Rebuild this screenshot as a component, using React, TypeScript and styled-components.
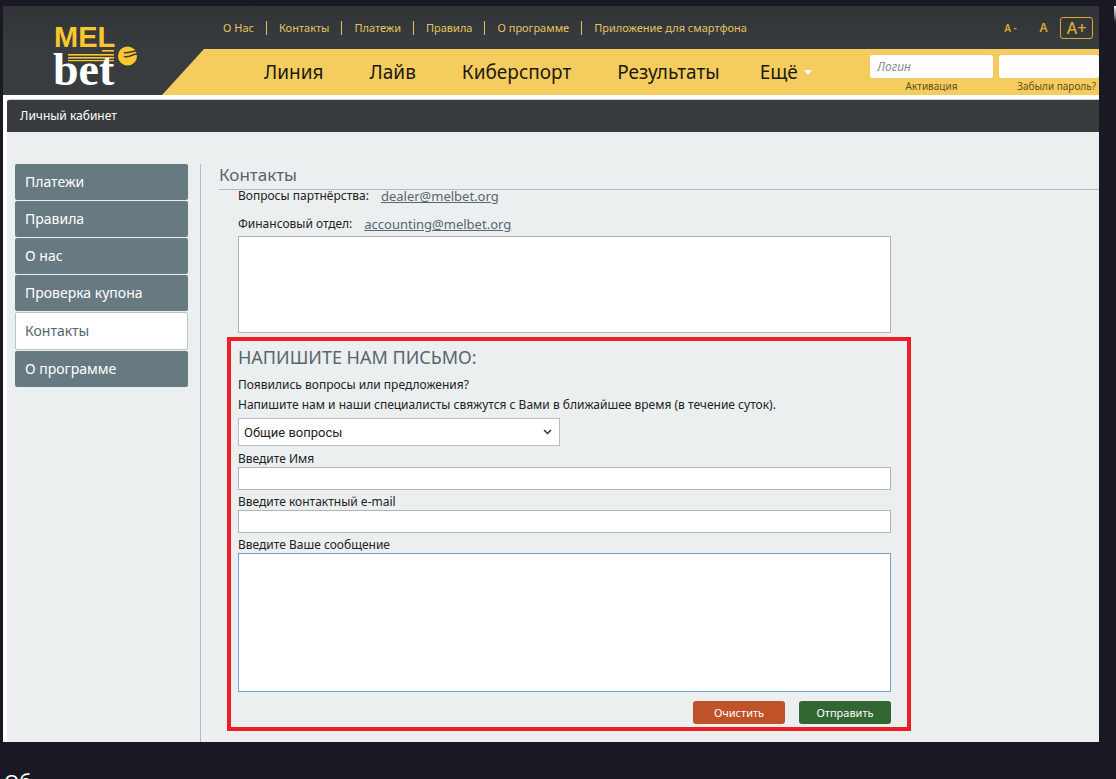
import React from "react";
import styled, { createGlobalStyle } from "styled-components";

const sans = `"Noto Sans", "Open Sans", sans-serif`;

const GlobalStyle = createGlobalStyle`
  *, *::before, *::after { box-sizing: border-box; }
  html { scrollbar-width: none; }
  body {
    margin: 0;
    background: #1a1923;
    font-family: ${sans};
    font-size: 12px;
    color: #222;
  }
  a { color: inherit; text-decoration: none; }
  button, input, select, textarea { font-family: inherit; margin: 0; }
  h1, h2, p { margin: 0; font-weight: 400; }
`;

const Page = styled.div`
  display: grid;
  grid-template-columns: minmax(0, 1fr) 2px;
  column-gap: 15px;
  padding: 6px 0 0 3px;
`;

const Frame = styled.div`
  background: #fff;
  overflow: hidden;
`;

const EdgeGlow = styled.div`
  height: 16px;
  background: linear-gradient(#f4f4f4, #8a8a90 60%, #1a1923);
`;

const Header = styled.header`
  display: grid;
  grid-template-columns: 159px minmax(0, 1fr);
  background: linear-gradient(#303437, #383c3f 40px);
`;

const Logo = styled.a`
  display: block;
  padding-left: 45px;
  height: 89px;
  svg { display: block; overflow: visible; }
`;

const TopRow = styled.div`
  display: flex;
  justify-content: space-between;
  align-items: center;
  height: 43px;
  padding: 0 6px 0 49px;
`;

const TopLinks = styled.nav`
  display: flex;
  font-size: 11px;
  line-height: 14px;
  white-space: nowrap;
  color: #e6c25e;
  a { padding: 0 12px; }
  a + a { border-left: 1px solid #e6c25e; }
`;

const TextSizes = styled.div`
  display: flex;
  align-items: center;
`;

const SizeButton = styled.button<{ $size: number; $active?: boolean }>`
  width: 33px;
  height: 22px;
  padding: 0;
  border: 1px solid ${(p) => (p.$active ? "#dca92f" : "transparent")};
  border-radius: 3px;
  background: none;
  color: #dca92f;
  font-size: ${(p) => p.$size}px;
  font-weight: ${(p) => (p.$active ? 500 : 600)};
  line-height: 18px;
`;

const NavBar = styled.div`
  display: flex;
  justify-content: space-between;
  height: 46px;
  padding-left: 102px;
  background: #f5cd5f;
  clip-path: polygon(42px 0, 100% 0, 100% 100%, 0 100%);
`;

const MainNav = styled.nav`
  display: flex;
  align-items: center;
  gap: 46px;
  font-size: 19px;
  white-space: nowrap;
  color: #1c1a10;
`;

const MoreLink = styled.a`
  display: flex;
  align-items: center;
  gap: 6px;
  margin-left: -6px;
  &::after {
    content: "";
    border: 4px solid transparent;
    border-top: 5px solid #fff;
    border-bottom: 0;
  }
`;

const Login = styled.form`
  display: grid;
  grid-template-columns: 123px 100px;
  column-gap: 6px;
  align-content: start;
  padding-top: 6px;
`;

const LoginInput = styled.input`
  width: 100%;
  height: 23px;
  padding: 0 7px;
  border: 0;
  border-radius: 2px;
  background: #fff;
  box-shadow: 0 0 1px #b99a45;
  font-size: 12px;
  font-style: italic;
  &::placeholder { color: #8b8b8b; opacity: 1; }
`;

const LoginLink = styled.a`
  font-size: 10px;
  line-height: 16px;
  text-align: center;
  white-space: nowrap;
  color: #5f5022;
  &:last-child { text-align: right; padding-right: 3px; }
`;

const Body = styled.div`
  margin: 4px 0 0 4px;
  background: #ebeff0;
`;

const AccountBar = styled.div`
  height: 33px;
  padding-left: 13px;
  border-top: 1px solid #ccd2d5;
  border-radius: 3px 0 0 0;
  background: #373b3e;
  font-size: 12px;
  line-height: 32px;
  color: #fff;
`;

const Columns = styled.div`
  display: grid;
  grid-template-columns: 185px minmax(0, 1fr);
  padding: 32px 0 0 8px;
`;

const Sidebar = styled.nav`
  display: flex;
  flex-direction: column;
  gap: 1px;
  width: 173px;
`;

const SideLink = styled.a<{ $active?: boolean }>`
  height: ${(p) => (p.$active ? 38 : 36)}px;
  padding-left: ${(p) => (p.$active ? 9 : 10)}px;
  border: ${(p) => (p.$active ? "1px solid #b9c4c8" : "0")};
  border-radius: 2px;
  background: ${(p) => (p.$active ? "#fff" : "#687a81")};
  color: ${(p) => (p.$active ? "#56666d" : "#fff")};
  font-size: 14px;
  line-height: 36px;
`;

const Content = styled.main`
  padding: 0 0 11px 18px;
  border-left: 1px solid #b4bcc0;
`;

const Title = styled.h1`
  height: 26px;
  border-bottom: 1px solid #b2babe;
  font-size: 17px;
  line-height: 22px;
  color: #56666d;
`;

const Contacts = styled.div`
  display: grid;
  row-gap: 16px;
  padding-left: 19px;
`;

const ContactLine = styled.p`
  display: flex;
  align-items: center;
  gap: 12px;
  font-size: 12px;
  line-height: 12px;
  a {
    font-size: 13px;
    color: #56666d;
    text-decoration: underline;
  }
`;

const Notice = styled.div`
  height: 97px;
  max-width: 653px;
  margin: 6px 20px 0 19px;
  border: 1px solid #b1b5b8;
  background: #fff;
`;

const LetterForm = styled.form`
  display: flex;
  flex-direction: column;
  max-width: 684px;
  margin: 4px 0 0 8px;
  padding: 4px 16px 3px 7px;
  border: 4px solid #ec1f26;
`;

const FormTitle = styled.h2`
  font-size: 18px;
  line-height: 24px;
  margin-bottom: 6px;
  color: #56666d;
`;

const Hint = styled.p`
  font-size: 12px;
  line-height: 20px;
`;

const SelectBox = styled.div`
  display: grid;
  max-width: 322px;
  margin: 3px 0 4px;
  > * { grid-area: 1 / 1; }
  svg { justify-self: end; align-self: center; margin-right: 8px; pointer-events: none; }
`;

const Select = styled.select`
  appearance: none;
  width: 100%;
  height: 28px;
  padding: 0 5px;
  border: 1px solid #b9bdc0;
  border-radius: 0;
  background: #fff;
  color: #222;
  font-family: Roboto, ${sans};
  font-size: 13px;
`;

const Label = styled.label`
  font-size: 12px;
  line-height: 18px;
  margin-bottom: -1px;
`;

const TextInput = styled.input`
  width: 100%;
  height: 23px;
  margin-bottom: 3px;
  border: 1px solid #b1b5b8;
  background: #fff;
`;

const Message = styled.textarea`
  display: block;
  width: 100%;
  height: 139px;
  border: 1px solid #72a4d2;
  background: #fff;
  resize: none;
  outline: 0;
`;

const Actions = styled.div`
  display: flex;
  justify-content: flex-end;
  gap: 14px;
  margin-top: 9px;
`;

const ActionButton = styled.button<{ $color: string }>`
  width: 92px;
  height: 23px;
  padding: 0;
  border: 0;
  border-radius: 3px;
  background: ${(p) => p.$color};
  color: #fff;
  font-size: 11px;
`;

const Caption = styled.p`
  grid-column: 1;
  margin-top: 26px;
  padding-left: 1px;
  font-size: 20px;
  line-height: 28px;
  color: #fff;
`;

const topLinks = ["О Нас", "Контакты", "Платежи", "Правила", "О программе", "Приложение для смартфона"];
const mainLinks = ["Линия", "Лайв", "Киберспорт", "Результаты"];
const sideLinks = ["Платежи", "Правила", "О нас", "Проверка купона", "Контакты", "О программе"];

function MelbetLogo() {
  return (
    <svg width="92" height="89" viewBox="0 0 92 89" role="img" aria-label="MELbet">
      <text x="6" y="41" fontFamily='"Liberation Sans Narrow", "Liberation Sans", sans-serif' fontWeight="700" fontSize="29" fill="#fbc72f">
        MEL
      </text>
      <g fill="#fbc72f">
        <rect x="20" y="48" width="46" height="1.600" />
        <rect x="20" y="51" width="46" height="1.600" />
        <rect x="20" y="54" width="46" height="1.200" />
        <rect x="54" y="44" width="12" height="1.600" />
      </g>
      <text x="5" y="79" fontFamily='"Liberation Serif", serif' fontWeight="700" fontSize="46" fill="#fff">
        bet
      </text>
      <circle cx="79.500" cy="50" r="9.500" fill="#fbc72f" />
      <g fill="none" stroke="#373b3e" strokeWidth="1.600">
        <path d="M76 46.500c4 1.500 8-2 14-1.500" />
        <path d="M76 50.500c5 1.500 9-3 14-2.500" />
      </g>
    </svg>
  );
}

export default function App() {
  return (
    <>
      <GlobalStyle />
      <Page>
        <Frame>
          <Header>
            <Logo href="#">
              <MelbetLogo />
            </Logo>
            <div>
              <TopRow>
                <TopLinks>
                  {topLinks.map((t) => (
                    <a href="#" key={t}>{t}</a>
                  ))}
                </TopLinks>
                <TextSizes>
                  <SizeButton $size={10}>A -</SizeButton>
                  <SizeButton $size={12}>A</SizeButton>
                  <SizeButton $size={16} $active>A+</SizeButton>
                </TextSizes>
              </TopRow>
              <NavBar>
                <MainNav>
                  {mainLinks.map((t) => (
                    <a href="#" key={t}>{t}</a>
                  ))}
                  <MoreLink href="#">Ещё</MoreLink>
                </MainNav>
                <Login>
                  <LoginInput type="text" placeholder="Логин" aria-label="Логин" />
                  <LoginInput type="password" aria-label="Пароль" />
                  <LoginLink href="#">Активация</LoginLink>
                  <LoginLink href="#">Забыли пароль?</LoginLink>
                </Login>
              </NavBar>
            </div>
          </Header>
          <Body>
            <AccountBar>Личный кабинет</AccountBar>
            <Columns>
              <Sidebar>
                {sideLinks.map((t) => (
                  <SideLink href="#" key={t} $active={t === "Контакты"}>{t}</SideLink>
                ))}
              </Sidebar>
              <Content>
                <Title>Контакты</Title>
                <Contacts>
                  <ContactLine>
                    Вопросы партнёрства: <a href="mailto:dealer@melbet.org">dealer@melbet.org</a>
                  </ContactLine>
                  <ContactLine>
                    Финансовый отдел: <a href="mailto:accounting@melbet.org">accounting@melbet.org</a>
                  </ContactLine>
                </Contacts>
                <Notice />
                <LetterForm>
                  <FormTitle>НАПИШИТЕ НАМ ПИСЬМО:</FormTitle>
                  <Hint>Появились вопросы или предложения?</Hint>
                  <Hint>Напишите нам и наши специалисты свяжутся с Вами в ближайшее время (в течение суток).</Hint>
                  <SelectBox>
                    <Select aria-label="Тема" defaultValue="general">
                      <option value="general">Общие вопросы</option>
                    </Select>
                    <svg width="9" height="6" viewBox="0 0 9 6" fill="none" stroke="#333" strokeWidth="1.500">
                      <path d="M1 1l3.500 3.500L8 1" />
                    </svg>
                  </SelectBox>
                  <Label htmlFor="name">Введите Имя</Label>
                  <TextInput id="name" type="text" />
                  <Label htmlFor="email">Введите контактный e-mail</Label>
                  <TextInput id="email" type="email" />
                  <Label htmlFor="message">Введите Ваше сообщение</Label>
                  <Message id="message" />
                  <Actions>
                    <ActionButton type="reset" $color="#bf5327">Очистить</ActionButton>
                    <ActionButton type="submit" $color="#326632">Отправить</ActionButton>
                  </Actions>
                </LetterForm>
              </Content>
            </Columns>
          </Body>
        </Frame>
        <EdgeGlow />
        <Caption>Об</Caption>
      </Page>
    </>
  );
}
